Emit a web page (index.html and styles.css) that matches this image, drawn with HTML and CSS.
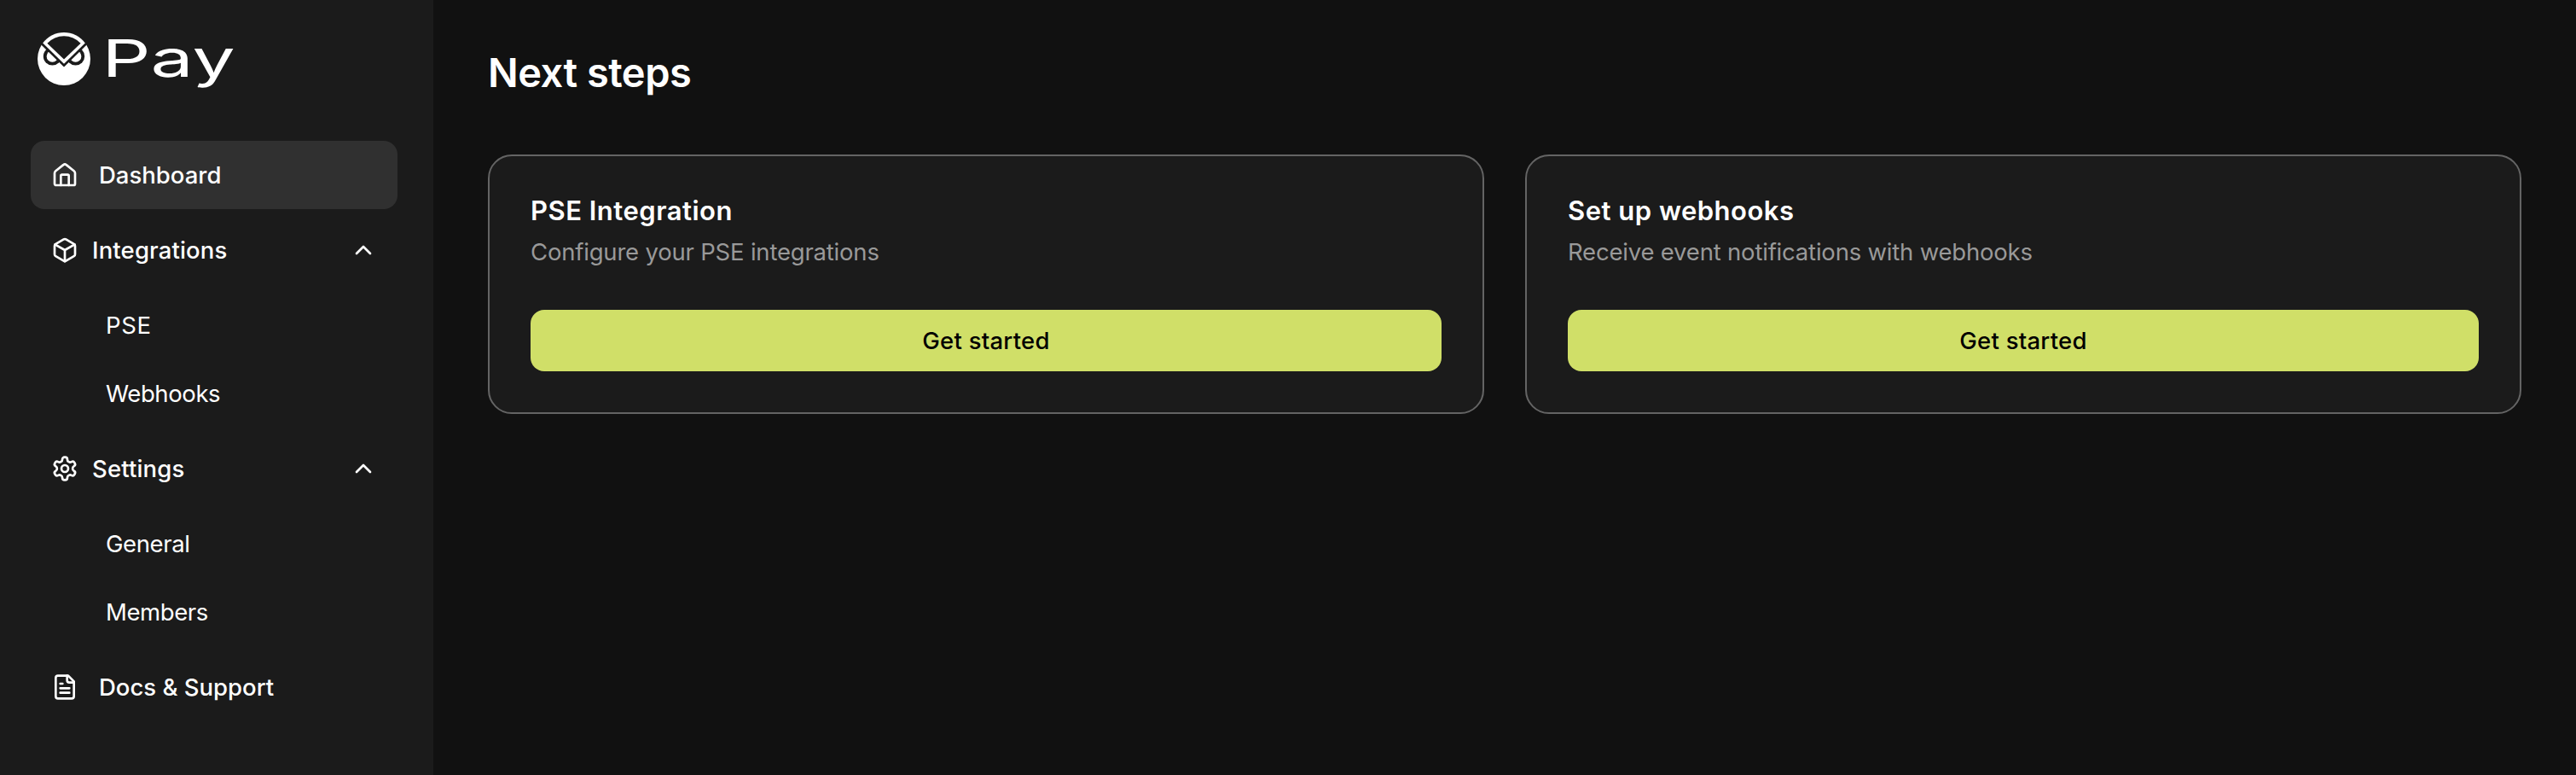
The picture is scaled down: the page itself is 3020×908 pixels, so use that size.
FILE: index.html
```html
<!DOCTYPE html>
<html lang="en">
<head>
    <meta charset="UTF-8">
    <title>Pay - Dashboard</title>
    <link rel="stylesheet" href="styles.css">
</head>
<body>
    <div class="layout">
        <!-- Sidebar -->
        <aside class="sidebar">
            <svg class="logo" viewBox="0 0 240 76" aria-label="Pay">
                <circle class="logo-light" cx="31" cy="39" r="31"/>
                <circle class="logo-dark" cx="17.4" cy="36" r="10.6"/>
                <circle class="logo-dark" cx="44.6" cy="36" r="10.6"/>
                <circle class="logo-light" cx="17.4" cy="36" r="6.8"/>
                <circle class="logo-light" cx="44.6" cy="36" r="6.8"/>
                <path class="logo-dark" d="M0 18.3L31 48.5L62 18.3V4H0z"/>
                <path class="logo-light" d="M6.2 20.4A31 31 0 0 1 55.8 20.4L31 44.8z"/>
                <path class="logo-dark" d="M11.4 20.8A27 27 0 0 1 50.6 20.8L31 39.6z"/>
                <text class="logo-text" transform="translate(75.5 60) scale(1.49 1)">Pay</text>
            </svg>

            <nav class="nav">
                <a class="nav-item wide active">
                    <svg class="icon" viewBox="0 0 24 24">
                        <path d="M3 10.4c0-.8.4-1.5 1-2l6.7-5.3c.8-.7 1.8-.7 2.6 0L20 8.4c.6.5 1 1.2 1 2v9.2c0 .8-.6 1.4-1.4 1.4H4.4C3.6 21 3 20.4 3 19.6z"/>
                        <path d="M8.5 21v-8.3a1 1 0 0 1 1-1h5a1 1 0 0 1 1 1V21"/>
                    </svg>
                    <span>Dashboard</span>
                </a>

                <a class="nav-item">
                    <svg class="icon" viewBox="0 0 24 24">
                        <path d="M11 2.6a2 2 0 0 1 2 0l7 4a2 2 0 0 1 1 1.73v7.34a2 2 0 0 1-1 1.73l-7 4a2 2 0 0 1-2 0l-7-4a2 2 0 0 1-1-1.73V8.33a2 2 0 0 1 1-1.73z"/>
                        <path d="M3.3 7L12 12l8.7-5M12 22V12"/>
                    </svg>
                    <span>Integrations</span>
                    <svg class="icon chevron" viewBox="0 0 24 24"><path d="M18 15l-6-6-6 6"/></svg>
                </a>
                <div class="subnav">
                    <a class="subnav-item caps">PSE</a>
                    <a class="subnav-item">Webhooks</a>
                </div>

                <a class="nav-item">
                    <svg class="icon" viewBox="0 0 24 24">
                        <path d="M12.22 2h-.44a2 2 0 0 0-2 2v.18a2 2 0 0 1-1 1.73l-.43.25a2 2 0 0 1-2 0l-.15-.08a2 2 0 0 0-2.73.73l-.22.38a2 2 0 0 0 .73 2.73l.15.1a2 2 0 0 1 1 1.72v.51a2 2 0 0 1-1 1.74l-.15.09a2 2 0 0 0-.73 2.73l.22.38a2 2 0 0 0 2.73.73l.15-.08a2 2 0 0 1 2 0l.43.25a2 2 0 0 1 1 1.73V20a2 2 0 0 0 2 2h.44a2 2 0 0 0 2-2v-.18a2 2 0 0 1 1-1.73l.43-.25a2 2 0 0 1 2 0l.15.08a2 2 0 0 0 2.73-.73l.22-.39a2 2 0 0 0-.73-2.73l-.15-.08a2 2 0 0 1-1-1.74v-.5a2 2 0 0 1 1-1.74l.15-.09a2 2 0 0 0 .73-2.73l-.22-.38a2 2 0 0 0-2.73-.73l-.15.08a2 2 0 0 1-2 0l-.43-.25a2 2 0 0 1-1-1.73V4a2 2 0 0 0-2-2z"/>
                        <circle cx="12" cy="12" r="3"/>
                    </svg>
                    <span>Settings</span>
                    <svg class="icon chevron" viewBox="0 0 24 24"><path d="M18 15l-6-6-6 6"/></svg>
                </a>
                <div class="subnav">
                    <a class="subnav-item">General</a>
                    <a class="subnav-item">Members</a>
                </div>

                <a class="nav-item wide">
                    <svg class="icon" viewBox="0 0 24 24">
                        <path d="M15 2H6a2 2 0 0 0-2 2v16a2 2 0 0 0 2 2h12a2 2 0 0 0 2-2V7z"/>
                        <path d="M14 2v4a2 2 0 0 0 2 2h4M10 9H8M16 13H8M16 17H8"/>
                    </svg>
                    <span>Docs &amp; Support</span>
                </a>
            </nav>
        </aside>

        <!-- Main content -->
        <main class="main">
            <h1>Next steps</h1>
            <div class="cards">
                <section class="card">
                    <h2>PSE Integration</h2>
                    <p>Configure your PSE integrations</p>
                    <button>Get started</button>
                </section>
                <section class="card">
                    <h2>Set up webhooks</h2>
                    <p>Receive event notifications with webhooks</p>
                    <button>Get started</button>
                </section>
            </div>
        </main>
    </div>
</body>
</html>
```
FILE: styles.css
```css
* {
    box-sizing: border-box;
}

body {
    margin: 0;
    background: #111111;
    color: #ffffff;
    font-family: Inter, sans-serif;
    font-size: 27.5px;
}

.layout {
    display: flex;
    min-height: 100vh;
}

/* Sidebar */
.sidebar {
    width: 508px;
    flex-shrink: 0;
    padding: 30px 42px 0 36px;
    background: #1b1b1b;
}

.logo {
    display: block;
    width: 240px;
    height: 76px;
    margin: 0 0 59px 8px;
    overflow: visible;
}

.logo-light {
    fill: #ffffff;
}

.logo-dark {
    fill: #1b1b1b;
}

.logo-text {
    fill: #ffffff;
    font-size: 60px;
    font-weight: 400;
}

.nav {
    display: flex;
    flex-direction: column;
    gap: 8px;
}

.nav-item {
    display: flex;
    align-items: center;
    gap: 16px;
    height: 80px;
    padding: 0 24px;
    border-radius: 16px;
    font-weight: 500;
    letter-spacing: 0.15px;
}

.nav-item.wide {
    gap: 24px;
    letter-spacing: 0;
}

.nav-item.active {
    background: #303030;
}

.icon {
    width: 32px;
    height: 32px;
    flex-shrink: 0;
    fill: none;
    stroke: #ffffff;
    stroke-width: 2;
    stroke-linecap: round;
    stroke-linejoin: round;
}

.chevron {
    margin-left: auto;
}

.subnav-item {
    display: flex;
    align-items: center;
    height: 80px;
    padding-left: 88px;
    letter-spacing: -0.4px;
}

.subnav-item.caps {
    letter-spacing: 0.6px;
}

/* Main content */
.main {
    flex: 1;
    padding: 56px 64px;
}

h1 {
    margin: 0 0 67px;
    font-size: 47px;
    line-height: 58px;
    font-weight: 600;
    letter-spacing: -0.5px;
}

.cards {
    display: grid;
    grid-template-columns: 1fr 1fr;
    gap: 48px;
}

.card {
    padding: 48px;
    border: 2px solid #646464;
    border-radius: 28px;
    background: #1b1b1b;
}

.card h2 {
    margin: 0;
    font-size: 31px;
    line-height: 32px;
    font-weight: 600;
    letter-spacing: 0.5px;
}

.card p {
    margin: 12px 0 48px;
    line-height: 40px;
    color: #999999;
    letter-spacing: -0.2px;
}

.card button {
    display: block;
    width: 100%;
    height: 72px;
    border: none;
    border-radius: 16px;
    background: #d0df68;
    color: #000000;
    font: inherit;
    font-weight: 500;
    letter-spacing: 0.25px;
}
```
